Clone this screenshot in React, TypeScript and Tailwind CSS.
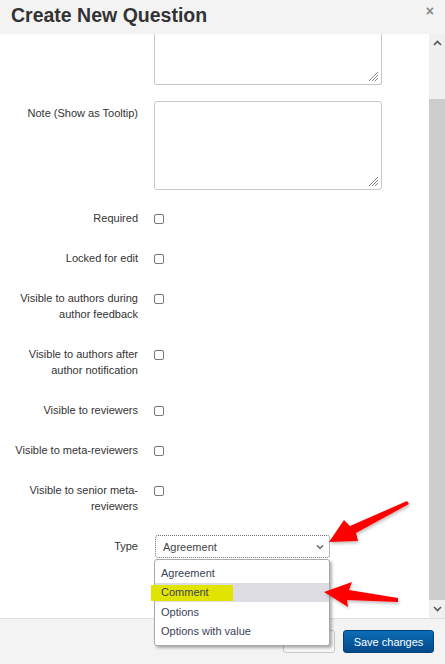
import React from 'react';

const font = { fontFamily: '"Liberation Sans", Arial, sans-serif' };

function Grip() {
  return (
    <svg className="absolute right-[2px] bottom-[2px]" width="12" height="12" viewBox="0 0 12 12">
      <path d="M11 2 L2 11 M11 5 L5 11 M11 8 L8 11" stroke="#8a8a8a" strokeWidth="1" />
    </svg>
  );
}

function Check() {
  return <div className="mt-[4px] ml-[16px] h-[10px] w-[10px] rounded-[2px] border border-[#777] bg-white" />;
}

function CheckRow({ label, className }: { label: React.ReactNode; className: string }) {
  return (
    <div className={`flex ${className}`}>
      <div className="w-[138px] whitespace-nowrap text-right">{label}</div>
      <Check />
    </div>
  );
}

export default function App() {
  return (
    <div
      className="relative flex h-[664px] w-[445px] flex-col overflow-hidden bg-white text-[11px] leading-4 text-[#333]"
      style={font}
    >
      {/* header */}
      <div className="flex h-[34px] items-start justify-between bg-[#f3f3f3] pl-[11px] pr-[11px]">
        <h2 className="pt-[3px] text-[19.5px] font-bold leading-6 text-[#333]">Create New Question</h2>
        <span className="pt-[3px] text-[14px] font-bold leading-4 text-[#858585]">×</span>
      </div>

      {/* body */}
      <div className="flex flex-1">
        <div className="flex-1">
          <div className="relative ml-[154px] h-[51px] w-[228px] rounded-b-[3px] border-x border-b border-[#c8c8c8]">
            <Grip />
          </div>

          <div className="mt-[16px] flex">
            <div className="w-[138px] pt-[4px] text-right">Note (Show as Tooltip)</div>
            <div className="relative ml-[16px] h-[89px] w-[228px] rounded-[3px] border border-[#c8c8c8]">
              <Grip />
            </div>
          </div>

          <CheckRow className="mt-[20px]" label="Required" />
          <CheckRow className="mt-6" label="Locked for edit" />
          <CheckRow
            className="mt-6"
            label={
              <>
                Visible to authors during
                <br />
                author feedback
              </>
            }
          />
          <CheckRow
            className="mt-6"
            label={
              <>
                Visible to authors after
                <br />
                author notification
              </>
            }
          />
          <CheckRow className="mt-6" label="Visible to reviewers" />
          <CheckRow className="mt-6" label="Visible to meta-reviewers" />
          <CheckRow
            className="mt-6"
            label={
              <>
                Visible to senior meta-
                <br />
                reviewers
              </>
            }
          />

          <div className="mt-[21px] flex">
            <div className="w-[138px] pt-[3px] text-right">Type</div>
            <div className="ml-[17px] flex h-[23px] w-[175px] items-center justify-between rounded-[3px] border border-dotted border-[#6f6f6f] pl-[7px] pr-[5px] text-[#444]">
              <span>Agreement</span>
              <svg width="8" height="6" viewBox="0 0 8 6">
                <path d="M1 1.5 L4 4.5 L7 1.5" stroke="#555" strokeWidth="1.2" fill="none" />
              </svg>
            </div>
          </div>
        </div>

        {/* scrollbar */}
        <div className="flex w-4 flex-col bg-[#f0f0f0]">
          <div className="flex h-[17px] items-center justify-center">
            <svg width="9" height="6" viewBox="0 0 9 6">
              <path d="M1 5 L4.5 1.5 L8 5" stroke="#555" strokeWidth="1.6" fill="none" />
            </svg>
          </div>
          <div className="mt-[48px] h-[501px] bg-[#cdcdcd]" />
          <div className="flex flex-1 items-center justify-center">
            <svg width="9" height="6" viewBox="0 0 9 6">
              <path d="M1 1 L4.5 4.5 L8 1" stroke="#555" strokeWidth="1.6" fill="none" />
            </svg>
          </div>
        </div>
      </div>

      {/* footer */}
      <div className="flex h-[46px] justify-end gap-2 border-t border-[#dedede] bg-[#f3f3f3] pt-[11px] pr-[11px]">
        <button className="h-[23px] w-[52px] rounded-[3px] border border-[#c9c9c9] bg-[#f7f7f7] text-[11px] text-[#333]">
          Close
        </button>
        <button className="h-[23px] w-[91px] rounded-[3px] border border-[#03417c] bg-gradient-to-b from-[#0d6db6] to-[#03498a] text-[11px] text-white">
          Save changes
        </button>
      </div>

      {/* open dropdown */}
      <div className="absolute left-[154px] top-[559px] w-[176px] rounded-[3px] border border-[#a9a9a9] bg-white pt-[3px] pb-[4px] text-[#3c4258] shadow-[2px_2px_3px_rgba(0,0,0,0.3)]">
        <div className="flex h-[19.5px] items-center px-[6px]">Agreement</div>
        <div className="relative flex h-[19.5px] items-center bg-[#dcdce2] px-[6px]">
          <span className="absolute left-[-4px] top-[2px] h-[16px] w-[82px] bg-[#e1e400]" />
          <span className="relative">Comment</span>
        </div>
        <div className="flex h-[19.5px] items-center px-[6px]">Options</div>
        <div className="flex h-[19.5px] items-center px-[6px]">Options with value</div>
      </div>

      {/* annotation arrows */}
      <svg className="pointer-events-none absolute left-0 top-0" width="445" height="664">
        <defs>
          <filter id="sh" x="-20%" y="-20%" width="140%" height="140%">
            <feDropShadow dx="1" dy="2" stdDeviation="1.5" floodColor="#000" floodOpacity="0.25" />
          </filter>
        </defs>
        <polygon
          points="329,542 344,520 350,526 407,501 409,504 356,533 358,541"
          fill="#ff0000"
          filter="url(#sh)"
        />
        <polygon
          points="324,592 352,582 349,590 398,598 398,602 347,600 348,607"
          fill="#ff0000"
          filter="url(#sh)"
        />
      </svg>
    </div>
  );
}
